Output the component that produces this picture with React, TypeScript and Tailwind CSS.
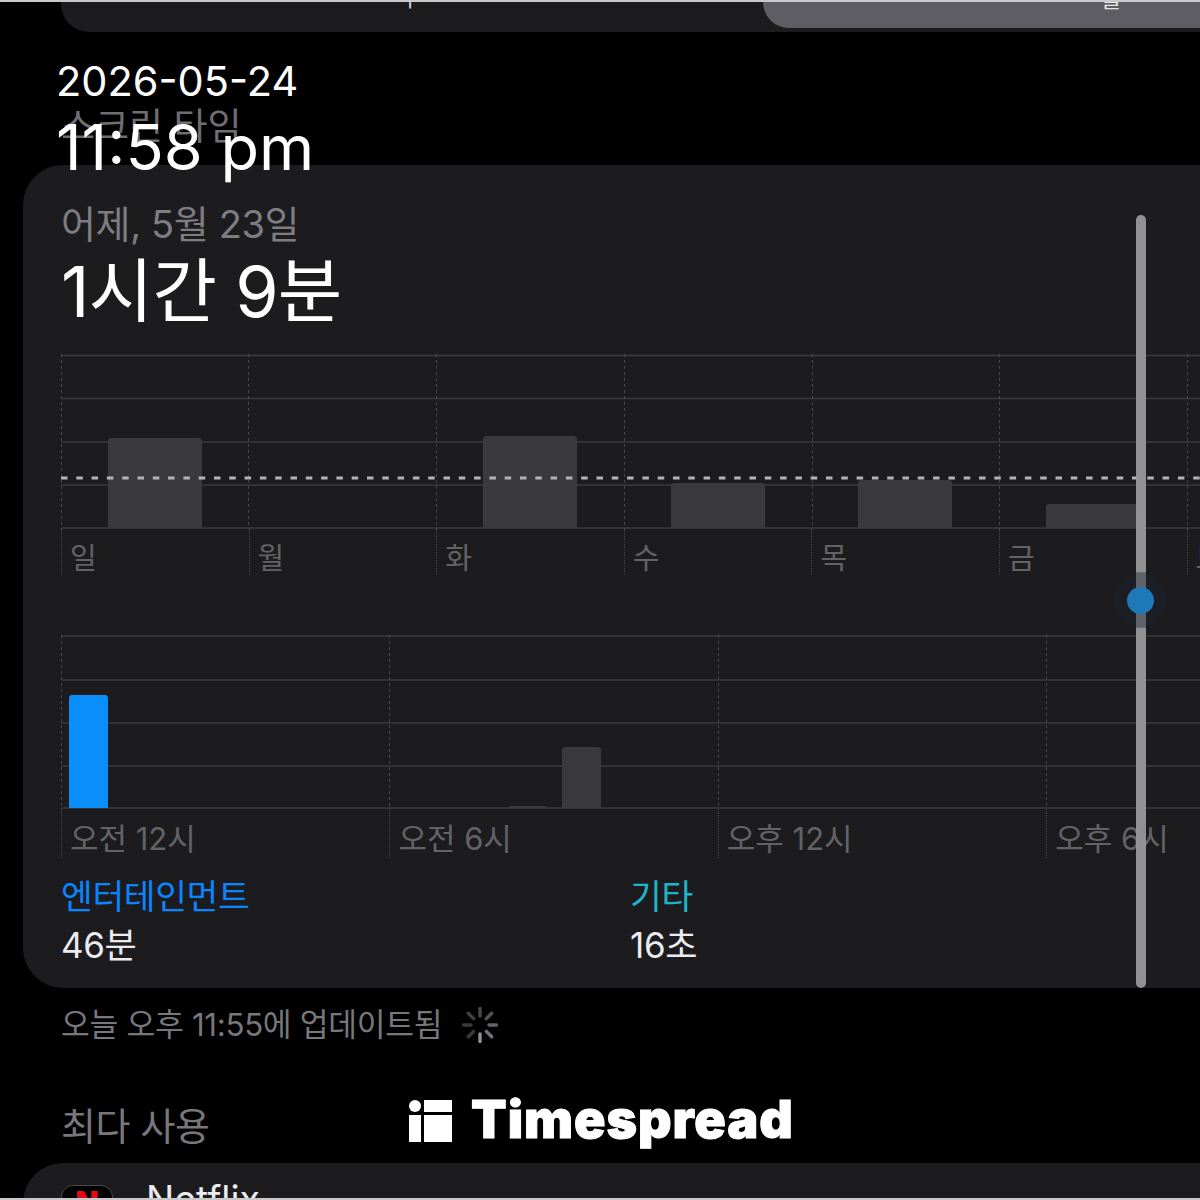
const FONT = "font-['Inter','Noto_Sans_CJK_KR',sans-serif]";

const weekBars = [
  { x: 47, w: 94, top: 84 },
  { x: 422, w: 94, top: 82 },
  { x: 610, w: 94, top: 129 },
  { x: 797, w: 94, top: 126 },
  { x: 985, w: 94, top: 150 },
];

const dayBars = [
  { x: 8, w: 39, top: 60, fill: '#0a8ffa' },
  { x: 447, w: 39, top: 171, fill: '#3a3a3c' },
  { x: 501, w: 39, top: 112, fill: '#3a3a3c' },
];

const ChartGrid = ({ height, rows, cols }: { height: number; rows: number[]; cols: number[] }) => (
  <>
    {rows.map((y) => (
      <line key={y} x1="0" x2="1139" y1={y} y2={y} stroke="#3a3a3d" strokeWidth="1.5" />
    ))}
    {cols.map((x) => (
      <line key={x} x1={x + 0.5} x2={x + 0.5} y1="0" y2={height} stroke="#48484b" strokeWidth="1" strokeDasharray="3 3" />
    ))}
  </>
);

const Bar = ({ x, w, top, bottom, fill }: { x: number; w: number; top: number; bottom: number; fill: string }) => (
  <path d={`M${x} ${bottom}V${top + 3}a3 3 0 0 1 3-3H${x + w - 3}a3 3 0 0 1 3 3V${bottom}Z`} fill={fill} />
);

const Spinner = () => (
  <svg width="38" height="38" viewBox="0 0 38 38" className="ml-[19px]">
    {Array.from({ length: 8 }).map((_, i) => (
      <line
        key={i}
        x1="19"
        y1="2.5"
        x2="19"
        y2="10"
        stroke="#8e8e93"
        strokeWidth="3.5"
        strokeLinecap="round"
        opacity={[0.5, 0.6, 0.7, 0.8, 1, 0.4, 0.4, 0.45][i]}
        transform={`rotate(${i * 45} 19 19)`}
      />
    ))}
  </svg>
);

const TimespreadLogo = () => (
  <div className="absolute left-[409px] top-[1100px] flex h-[42px] items-center gap-[19px]">
    <svg width="43" height="42" viewBox="0 0 43 42" fill="#ffffff">
      <circle cx="6" cy="6" r="6" />
      <rect x="0" y="15" width="12" height="27" />
      <rect x="15" y="0" width="28" height="12" />
      <rect x="15" y="15" width="28" height="27" />
    </svg>
    <span className="-mt-[3px] text-[52px] leading-none font-black tracking-[0.018em] text-white [-webkit-text-stroke:1px_white]">
      Timespread
    </span>
  </div>
);

export default function App() {
  return (
    <div className={`relative w-[1200px] h-[1200px] overflow-hidden bg-black ${FONT}`}>
      <div className="h-[2px] bg-[#c9c9cc]" />

      {/* segmented control */}
      <div className="ml-[61px] flex h-[30px] rounded-bl-[28px] bg-[#1c1c1e]">
        <div className="h-[30px] w-[702px] overflow-hidden pr-[4px] text-center">
          <span className="relative top-[-15px] text-[22px] leading-none text-[#d1d1d6]">주</span>
        </div>
        <div className="h-[26px] flex-1 overflow-hidden rounded-bl-[28px] bg-[#5e5d63] pl-[258px] text-center">
          <span className="relative top-[-14px] text-[22px] leading-none text-[#e5e5ea]">월</span>
        </div>
      </div>

      <h2 className="ml-[61px] mt-[73px] h-[60px] text-[37px] leading-[44px] text-[#6e6e73]">스크린 타임</h2>

      {/* main card */}
      <div className="ml-[23px] h-[823px] rounded-l-[40px] bg-[#1c1c1e] pl-[38px] pt-[37px]">
        <p className="text-[38px] leading-[44px] tracking-[-0.01em] text-[#7d7d82]">어제, 5월 23일</p>
        <p className="mt-[7px] text-[70px] leading-[78px] tracking-[-0.01em] text-white">1시간 9분</p>

        {/* week chart */}
        <svg width="1139" height="175" viewBox="0 0 1139 175" className="mt-[23px] block">
          <ChartGrid height={175} rows={[1.5, 44.5, 88, 131, 174]} cols={[0, 187, 375, 563, 751, 938, 1126]} />
          {weekBars.map((b) => (
            <Bar key={b.x} x={b.x} w={b.w} top={b.top} bottom={174} fill="#3a3a3c" />
          ))}
          <line x1="0" x2="1139" y1="124" y2="124" stroke="#b4b4b8" strokeWidth="3" strokeDasharray="6.5 8.8" />
        </svg>
        <div className="grid h-[46px] grid-cols-[repeat(7,187.6px)]">
          {['일', '월', '화', '수', '목', '금', '토'].map((d) => (
            <div key={d} className="h-[46px] border-l border-dotted border-[#48484b] pl-2 text-[29px] leading-[60px] text-[#636366]">
              {d}
            </div>
          ))}
        </div>

        {/* day chart */}
        <svg width="1139" height="174" viewBox="0 0 1139 174" className="mt-[60px] block">
          <ChartGrid height={174} rows={[1, 45, 88, 131, 173]} cols={[0, 328, 657, 985]} />
          {dayBars.map((b) => (
            <Bar key={b.x} x={b.x} w={b.w} top={b.top} bottom={173} fill={b.fill} />
          ))}
        </svg>
        <div className="grid h-[49px] grid-cols-[repeat(4,328.4px)]">
          {['오전 12시', '오전 6시', '오후 12시', '오후 6시'].map((t) => (
            <div key={t} className="h-[49px] border-l border-dotted border-[#48484b] pl-2 text-[31px] leading-[60px] text-[#636366]">
              {t}
            </div>
          ))}
        </div>

        {/* category legend */}
        <div className="mt-[14px] flex">
          <div className="w-[569px]">
            <p className="text-[34.5px] leading-[49px] tracking-[-0.01em] text-[#0a84ff]">엔터테인먼트</p>
            <p className="text-[35px] leading-[49px] tracking-[-0.01em] text-[#ebebf0]">46분</p>
          </div>
          <div>
            <p className="text-[34.5px] leading-[49px] tracking-[-0.01em] text-[#1fb5c9]">기타</p>
            <p className="text-[35px] leading-[49px] tracking-[-0.01em] text-[#ebebf0]">16초</p>
          </div>
        </div>
      </div>

      <div className="ml-[61px] mt-[17px] flex h-[40px] items-center text-[31.3px] tracking-[-0.01em] text-[#77777c]">
        오늘 오후 11:55에 업데이트됨
        <Spinner />
      </div>

      <h3 className="ml-[61px] mt-[56px] text-[38px] leading-[50px] tracking-[-0.01em] text-[#77777c]">최다 사용</h3>

      {/* first app row */}
      <div className="ml-[23px] mt-[12px] flex h-[60px] gap-[33px] rounded-tl-[40px] bg-[#1c1c1e] pl-[38px] pt-[22px]">
        <div className="flex h-[52px] w-[52px] justify-center rounded-[12px] border border-[#48484a] bg-black pt-[1px] text-[30px] leading-none font-black text-[#e50914]">
          N
        </div>
        <p className="-mt-[5px] text-[37.5px] leading-[40px] text-[#ebebf0]">Netflix</p>
      </div>

      {/* scroll indicator */}
      <div className="absolute left-[1136px] top-[215px] h-[773px] w-[10px] rounded-full bg-[#98989b]/95" />
      <div className="absolute left-[1136px] top-[572px] h-[56px] w-[10px] bg-[#6a6c70]" />
      <div className="absolute left-[1113px] top-[573px] h-[54px] w-[54px] rounded-full bg-[#1a3248]/15" />
      <div className="absolute left-[1127px] top-[587px] h-[27px] w-[27px] rounded-full bg-[#1f78b8]" />

      <div className="absolute inset-x-0 bottom-0 h-[2px] bg-[#c9c9cc]" />

      {/* timestamp overlay */}
      <div className="absolute left-[56px] top-[56px] text-white">
        <p className="text-[41.5px] leading-[50px]">2026-05-24</p>
        <p className="mt-[5px] text-[63px] leading-[72px]">11:58 pm</p>
      </div>

      <TimespreadLogo />
    </div>
  );
}
